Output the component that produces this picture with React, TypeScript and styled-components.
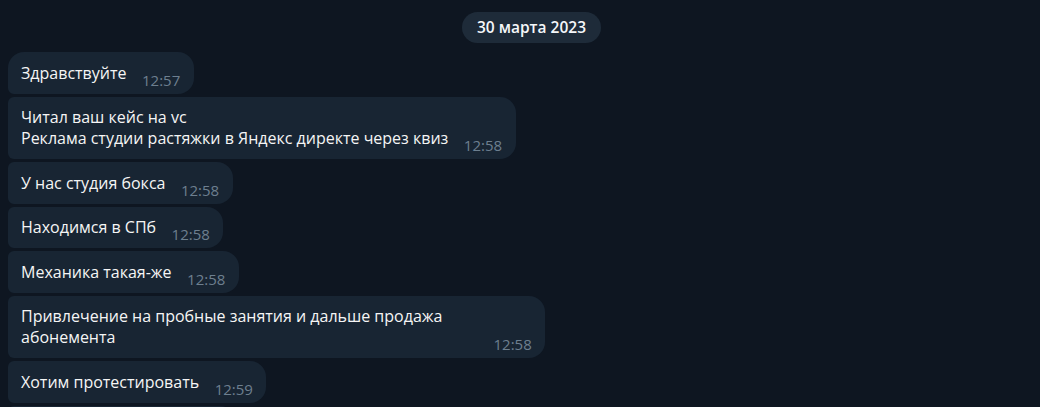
import React from "react";
import styled, { createGlobalStyle } from "styled-components";

const GlobalStyle = createGlobalStyle`
  html, body {
    margin: 0;
    height: 100%;
    overflow: hidden;
    background: #0e1621;
  }
  body {
    font-family: "Open Sans", "Noto Sans", sans-serif;
    -webkit-font-smoothing: antialiased;
  }
`;

const Chat = styled.main`
  display: flex;
  flex-direction: column;
  align-items: flex-start;
  gap: 3px;
  padding: 12px 0 0 8px;
`;

const DateRow = styled.div`
  align-self: stretch;
  display: flex;
  justify-content: center;
  padding-left: 15px;
  margin-bottom: 6px;
`;

const DatePill = styled.div`
  background: #1e2b39;
  color: #f5f7f9;
  font-size: 15.5px;
  font-weight: 600;
  line-height: 21px;
  padding: 5px 15px;
  border-radius: 16px;
`;

const Bubble = styled.div<{ $first?: boolean }>`
  display: flex;
  align-items: flex-end;
  background: #182533;
  border-radius: 16px 16px 16px 6px;
  border-top-left-radius: ${p => (p.$first ? "16px" : "6px")};
  padding: 10.5px 13.5px 10px 13px;
`;

const Text = styled.div`
  max-width: 457px;
  color: #f5f5f5;
  font-size: 16px;
  line-height: 21px;
  white-space: pre-line;
`;

const Time = styled.span`
  flex-shrink: 0;
  margin-left: 15.5px;
  margin-bottom: -7px;
  color: #6d7f8f;
  font-size: 15px;
  line-height: 21px;
`;

type Msg = { text: string; time: string };

const messages: Msg[] = [
  { text: "Здравствуйте", time: "12:57" },
  { text: "Читал ваш кейс на vc\nРеклама студии растяжки в Яндекс директе через квиз", time: "12:58" },
  { text: "У нас студия бокса", time: "12:58" },
  { text: "Находимся в СПб", time: "12:58" },
  { text: "Механика такая-же", time: "12:58" },
  { text: "Привлечение на пробные занятия и дальше продажа абонемента", time: "12:58" },
  { text: "Хотим протестировать", time: "12:59" },
  { text: "Сколько это стоит?", time: "12:59" },
];

export default function App() {
  return (
    <>
      <GlobalStyle />
      <Chat>
        <DateRow>
          <DatePill>30 марта 2023</DatePill>
        </DateRow>
        {messages.map((m, i) => (
          <Bubble key={i} $first={i === 0}>
            <Text>{m.text}</Text>
            <Time>{m.time}</Time>
          </Bubble>
        ))}
      </Chat>
    </>
  );
}
